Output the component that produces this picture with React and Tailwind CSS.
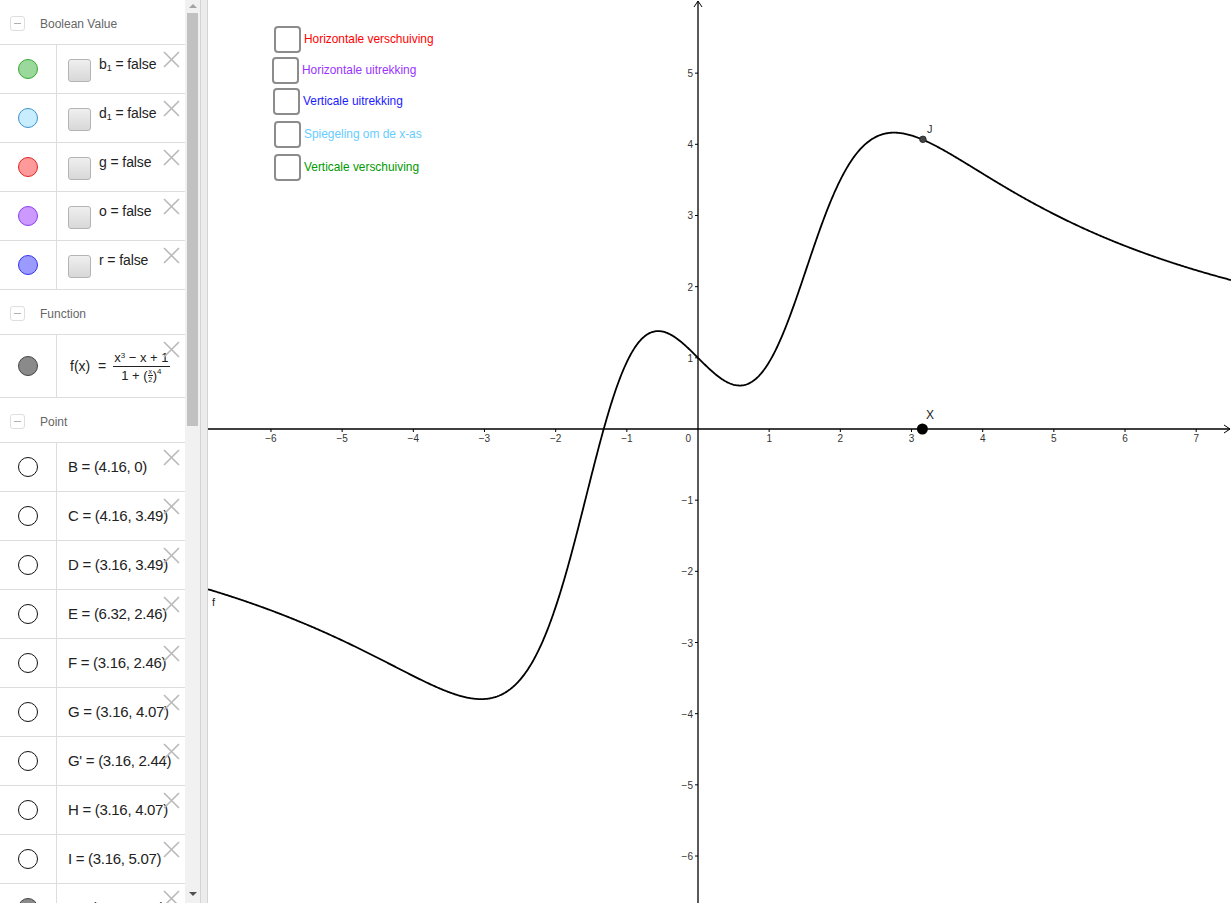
import React from 'react';

const SCALE = 71.17;
const OX = 490; // origin inside graphics view
const OY = 429;
const GW = 1023;
const GH = 903;

const f = (x) => (x * x * x - x + 1) / (1 + Math.pow(x / 2, 4));

const curvePath = () => {
  const pts = [];
  for (let px = 0; px <= GW; px += 1) {
    const x = (px - OX) / SCALE;
    const py = OY - f(x) * SCALE;
    pts.push(`${px === 0 ? 'M' : 'L'}${px},${py.toFixed(2)}`);
  }
  return pts.join(' ');
};

const booleans = [
  { name: 'b', sub: '1', fill: 'bg-[#9bd89b]', ring: 'border-[#35a835]' },
  { name: 'd', sub: '1', fill: 'bg-[#c8edff]', ring: 'border-[#3d93cc]' },
  { name: 'g', fill: 'bg-[#ff9a9a]', ring: 'border-[#e02424]' },
  { name: 'o', fill: 'bg-[#cc99ff]', ring: 'border-[#8a3cf0]' },
  { name: 'r', fill: 'bg-[#9a9aff]', ring: 'border-[#3434f0]' },
];

const points = [
  'B = (4.16, 0)',
  'C = (4.16, 3.49)',
  'D = (3.16, 3.49)',
  'E = (6.32, 2.46)',
  'F = (3.16, 2.46)',
  'G = (3.16, 4.07)',
  "G' = (3.16, 2.44)",
  'H = (3.16, 4.07)',
  'I = (3.16, 5.07)',
];

const toggles = [
  { label: 'Horizontale verschuiving', color: 'text-[#ff0000]', pos: 'left-[66px] top-[26px]' },
  { label: 'Horizontale uitrekking', color: 'text-[#9933ff]', pos: 'left-[64px] top-[57px]' },
  { label: 'Verticale uitrekking', color: 'text-[#1a1aff]', pos: 'left-[65px] top-[88px]' },
  { label: 'Spiegeling om de x-as', color: 'text-[#66ccff]', pos: 'left-[66px] top-[121px]' },
  { label: 'Verticale verschuiving', color: 'text-[#009900]', pos: 'left-[66px] top-[154px]' },
];

const DeleteIcon = () => (
  <svg width="17" height="17" viewBox="0 0 17 17" className="absolute right-[5px] top-[6px]">
    <path d="M1 1 L16 16 M16 1 L1 16" stroke="#b9b9b9" strokeWidth="1.6" fill="none" />
  </svg>
);

const GroupHeader = ({ title }) => (
  <div className="flex h-[45px] items-center border-b border-[#dddddd] pt-[3px]">
    <div className="ml-[10px] flex h-[15px] w-[15px] items-center justify-center rounded-[3px] border border-[#dedede]">
      <div className="h-[1px] w-[7px] bg-[#b0b0b0]" />
    </div>
    <span className="ml-[15px] text-[12px] text-[#666666]">{title}</span>
  </div>
);

const Row = ({ circle, height = 'h-[49px]', children }) => (
  <div className={`flex ${height} border-b border-[#dddddd]`}>
    <div className="flex w-[57px] shrink-0 items-center justify-center border-r border-[#dddddd]">
      {circle}
    </div>
    <div className="relative flex flex-1 items-center">
      {children}
      <DeleteIcon />
    </div>
  </div>
);

const Dot = ({ cls }) => <div className={`h-[20px] w-[20px] rounded-full border ${cls}`} />;

const AlgebraView = () => (
  <div className="flex h-full w-[200px] shrink-0">
    <div className="w-[185px] overflow-hidden font-['Liberation_Sans',Arial,sans-serif] text-[#222]">
      <GroupHeader title="Boolean Value" />
      {booleans.map((b) => (
        <Row key={b.name} circle={<Dot cls={`${b.fill} ${b.ring}`} />}>
          <div className="ml-[11px] mt-[2px] h-[23px] w-[23px] rounded-[3px] border border-[#b4b4b4] bg-gradient-to-b from-[#efefef] to-[#d8d8d8]" />
          <span className="ml-[8px] -mt-[9px] text-[14px] tracking-[-0.1px]">
            {b.name}
            {b.sub && <sub className="text-[9px]">{b.sub}</sub>} = false
          </span>
        </Row>
      ))}
      <GroupHeader title="Function" />
      <Row height="h-[63px]" circle={<Dot cls="bg-[#8a8a8a] border-[#444444]" />}>
        <div className="ml-[13px] flex items-center">
          <span className="whitespace-pre text-[14px]">f(x)  =</span>
          <div className="ml-[7px] flex flex-col items-center text-[13px] leading-[15px]">
            <span className="px-[1px]">
              x<sup className="text-[8px]">3</sup> − x + 1
            </span>
            <div className="my-[1px] h-[1px] w-full bg-[#222]" />
            <span className="flex items-center">
              1 + (
              <span className="inline-flex flex-col items-center text-[7px] leading-[7px]">
                <span>x</span>
                <span className="h-[1px] w-[5px] bg-[#222]" />
                <span>2</span>
              </span>
              )<span className="self-start text-[8px] leading-[8px]">4</span>
            </span>
          </div>
        </div>
      </Row>
      <GroupHeader title="Point" />
      {points.map((p) => (
        <Row key={p} circle={<Dot cls="bg-white border-[#111] border-[1.5px]" />}>
          <span className="ml-[11px] whitespace-nowrap text-[15px] tracking-[-0.3px]">{p}</span>
        </Row>
      ))}
      <Row circle={<Dot cls="bg-[#8a8a8a] border-[#444444]" />}>
        <span className="ml-[11px] whitespace-nowrap text-[15px] tracking-[-0.3px]">J = (3.16, 4.07)</span>
      </Row>
    </div>
    <div className="flex w-[15px] flex-col items-center bg-[#f1f1f1]">
      <div className="mt-[4px] h-0 w-0 border-x-[4px] border-b-[4px] border-x-transparent border-b-[#a3a3a3]" />
      <div className="mt-[5px] h-[413px] w-[11px] bg-[#c1c1c1]" />
      <div className="flex-1" />
      <div className="mb-[7px] h-0 w-0 border-x-[4px] border-t-[4px] border-x-transparent border-t-[#505050]" />
    </div>
  </div>
);

const GraphicsView = () => {
  const xTicks = [];
  for (let i = -6; i <= 7; i++) if (i !== 0) xTicks.push(i);
  const yTicks = [];
  for (let i = -6; i <= 5; i++) if (i !== 0) yTicks.push(i);
  const num = (n) => (n < 0 ? `\u2212${-n}` : `${n}`);

  const jx = OX + 3.16 * SCALE;
  const jy = OY - 4.07 * SCALE;

  return (
    <div className="relative h-full flex-1 overflow-hidden bg-white">
      <svg width={GW} height={GH} className="absolute left-0 top-0" fontFamily="'Liberation Sans', Arial, sans-serif">
        {/* axes */}
        <line x1="0" y1={OY} x2={GW - 1} y2={OY} stroke="#000" strokeWidth="1.3" />
        <line x1={OX} y1="1" x2={OX} y2={GH} stroke="#000" strokeWidth="1.3" />
        <path d={`M${GW - 7},${OY - 4} L${GW - 1},${OY} L${GW - 7},${OY + 4}`} stroke="#000" strokeWidth="1" fill="none" />
        <path d={`M${OX - 4},7 L${OX},1 L${OX + 4},7`} stroke="#000" strokeWidth="1" fill="none" />

        {xTicks.map((i) => {
          const px = OX + i * SCALE;
          return (
            <g key={`x${i}`}>
              <line x1={px} y1={OY} x2={px} y2={OY + 3} stroke="#000" strokeWidth="1" />
              <text x={px} y={OY + 13} fontSize="10" fill="#333" textAnchor="middle">
                {num(i)}
              </text>
            </g>
          );
        })}
        {yTicks.map((i) => {
          const py = OY - i * SCALE;
          return (
            <g key={`y${i}`}>
              <line x1={OX - 3} y1={py} x2={OX} y2={py} stroke="#000" strokeWidth="1" />
              <text x={OX - 5} y={py + 4} fontSize="10" fill="#333" textAnchor="end">
                {num(i)}
              </text>
            </g>
          );
        })}
        <text x={OX - 7} y={OY + 13} fontSize="10" fill="#333" textAnchor="end">
          0
        </text>

        {/* f */}
        <path d={curvePath()} stroke="#000" strokeWidth="1.8" fill="none" />
        <text x="4" y="606" fontSize="11" fill="#222">
          f
        </text>

        {/* points */}
        <circle cx={jx} cy={jy} r="3.3" fill="#444" stroke="#222" strokeWidth="0.8" />
        <text x={jx + 4} y={jy - 6} fontSize="11" fill="#333">
          J
        </text>
        <circle cx={jx - 0.5} cy={OY} r="5.5" fill="#000" />
        <text x={jx + 3} y={OY - 10} fontSize="12" fill="#222">
          X
        </text>
      </svg>

      {toggles.map((t) => (
        <div key={t.label} className={`absolute flex items-center ${t.pos}`}>
          <div className="h-[27px] w-[27px] rounded-[4px] border-2 border-[#8c8c8c] bg-white" />
          <span className={`ml-[3px] font-['Liberation_Sans',Arial,sans-serif] text-[11.9px] ${t.color}`}>{t.label}</span>
        </div>
      ))}
    </div>
  );
};

const App = () => {
  return (
    <div className="flex h-[903px] w-[1231px] overflow-hidden bg-white">
      <AlgebraView />
      <div className="h-full w-[8px] shrink-0 border-x border-[#d4d4d4] bg-[#ececec]" />
      <GraphicsView />
    </div>
  );
};

export default App;
